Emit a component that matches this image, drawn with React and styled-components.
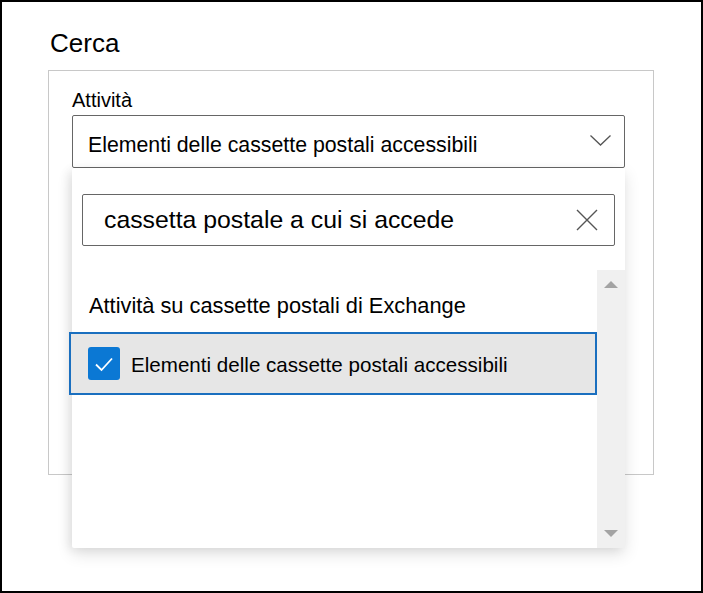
import React from "react"
import styled, { createGlobalStyle } from "styled-components"

const GlobalStyle = createGlobalStyle`
  html, body {
    margin: 0;
    padding: 0;
    background: #ffffff;
  }
  body {
    font-family: "Liberation Sans", Arial, sans-serif;
    color: #000000;
  }
`

const Frame = styled.div`
  position: relative;
  box-sizing: border-box;
  width: 703px;
  height: 593px;
  border: 2px solid #000000;
  padding: 26px 0 0 46px;
`

const Heading = styled.h2`
  margin: 0 0 12px 2px;
  font-size: 26px;
  line-height: 30px;
  font-weight: 400;
`

const GroupBox = styled.div`
  box-sizing: border-box;
  width: 606px;
  height: 405px;
  border: 1px solid #c8c8c8;
  padding: 17px 28px 0 23px;
`

const Label = styled.div`
  font-size: 20px;
  line-height: 24px;
  margin-bottom: 3px;
`

const Select = styled.div`
  box-sizing: border-box;
  height: 53px;
  border: 1px solid #666666;
  border-radius: 2px;
  padding: 17px 13px 0 15px;
  display: flex;
  justify-content: space-between;
  font-size: 21.3px;
  line-height: 24px;
`

const Chevron = styled.svg`
  margin-top: 2px;
`

const Panel = styled.div`
  position: absolute;
  left: 70px;
  top: 166px;
  width: 553px;
  height: 380px;
  background: #ffffff;
  border-radius: 2px;
  box-shadow: 0 6px 16px rgba(0, 0, 0, 0.12), -4px 2px 10px rgba(0, 0, 0, 0.06);
  display: flex;
  flex-direction: column;
`

const SearchBox = styled.div`
  box-sizing: border-box;
  margin: 26px 10px 0 10px;
  height: 52px;
  border: 1px solid #666666;
  border-radius: 2px;
  padding: 0 16px 0 21px;
  display: flex;
  align-items: center;
  justify-content: space-between;
  font-size: 24.8px;
`

const ListArea = styled.div`
  flex: 1;
  margin-top: 24px;
  display: flex;
`

const ListContent = styled.div`
  flex: 1;
`

const GroupHeader = styled.div`
  padding: 24px 0 14px 17px;
  font-size: 21.8px;
  line-height: 24px;
`

const OptionRow = styled.div`
  box-sizing: border-box;
  margin-left: -3px;
  height: 63px;
  background: #e6e6e6;
  border: 2px solid #1a6fbf;
  padding-left: 17px;
  display: flex;
  align-items: center;
  gap: 11px;
  font-size: 20.6px;
`

const OptionText = styled.span`
  padding-top: 3px;
`

const CheckBox = styled.div`
  width: 32px;
  height: 33px;
  border-radius: 3px;
  background: #0b78d4;
  display: flex;
  align-items: center;
  justify-content: center;
`

const Scrollbar = styled.div`
  width: 28px;
  background: #f0f0f0;
  display: flex;
  flex-direction: column;
  justify-content: space-between;
  align-items: center;
  padding: 11px 0 11px;
`

const Arrow = styled.div`
  width: 0;
  height: 0;
  border-left: 7px solid transparent;
  border-right: 7px solid transparent;
  ${(p) => (p.$up ? "border-bottom: 7px solid #a3a3a3;" : "border-top: 7px solid #a3a3a3;")}
`

export default function App() {
  return (
    <>
      <GlobalStyle />
      <Frame>
        <Heading>Cerca</Heading>
        <GroupBox>
          <Label>Attività</Label>
          <Select>
            <span>Elementi delle cassette postali accessibili</span>
            <Chevron width="21" height="11" viewBox="0 0 21 11">
              <polyline points="0.5,0.5 10.5,10 20.5,0.5" fill="none" stroke="#555" strokeWidth="1.3" />
            </Chevron>
          </Select>
        </GroupBox>
        <Panel>
          <SearchBox>
            <span>cassetta postale a cui si accede</span>
            <svg width="22" height="22" viewBox="0 0 22 22">
              <path d="M1 1 L21 21 M21 1 L1 21" stroke="#555" strokeWidth="1.4" />
            </svg>
          </SearchBox>
          <ListArea>
            <ListContent>
              <GroupHeader>Attività su cassette postali di Exchange</GroupHeader>
              <OptionRow>
                <CheckBox>
                  <svg width="20" height="16" viewBox="0 0 20 16">
                    <polyline points="2,8.5 7.5,14 18,2.5" fill="none" stroke="#fff" strokeWidth="1.8" />
                  </svg>
                </CheckBox>
                <OptionText>Elementi delle cassette postali accessibili</OptionText>
              </OptionRow>
            </ListContent>
            <Scrollbar>
              <Arrow $up />
              <Arrow />
            </Scrollbar>
          </ListArea>
        </Panel>
      </Frame>
    </>
  )
}
